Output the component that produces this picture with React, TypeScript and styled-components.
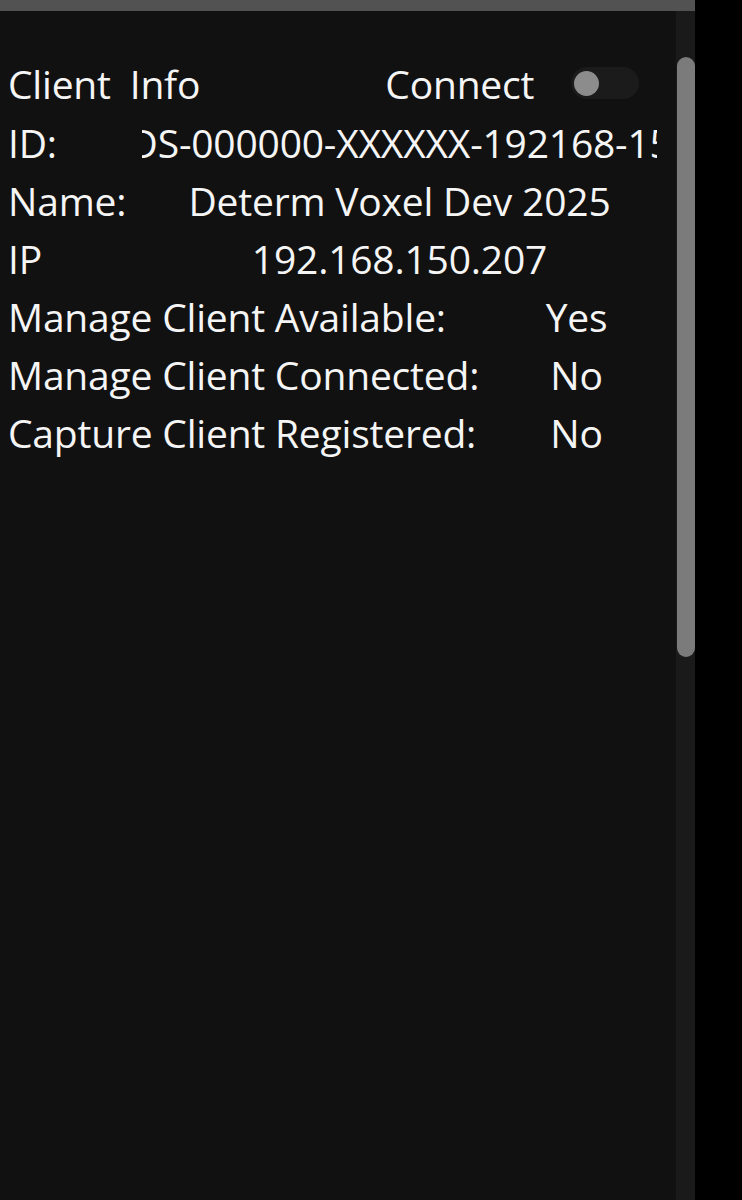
import React from "react";
import styled, { createGlobalStyle } from "styled-components";

const Global = createGlobalStyle`
  html, body { margin: 0; padding: 0; background: #000; }
  body { font-family: "Open Sans", "Noto Sans", sans-serif; }
`;

const Page = styled.div`
  width: 742px;
  height: 1200px;
  display: flex;
  background: #000;
  overflow: hidden;
`;

const Panel = styled.div`
  width: 695px;
  height: 1200px;
  display: flex;
  flex-direction: column;
  background: #111111;
`;

const TopBar = styled.div`
  height: 11px;
  background: #525252;
  flex-shrink: 0;
`;

const Body = styled.div`
  flex: 1;
  display: flex;
`;

const Content = styled.div`
  flex: 1;
  padding: 42px 0 0 8px;
  display: flex;
  flex-direction: column;
  color: #f5f5f5;
  font-size: 39px;
  letter-spacing: -0.2px;
`;

const Track = styled.div`
  width: 19px;
  background: #1a1a1a;
  padding-top: 46px;
  display: flex;
  justify-content: center;
`;

const Thumb = styled.div`
  width: 18px;
  height: 600px;
  background: #7b7b7b;
  border-radius: 9px;
`;

const Row = styled.div<{ $split?: boolean }>`
  display: grid;
  grid-template-columns: ${(p) => (p.$split ? "488px 161px" : "134px 515px")};
  align-items: center;
  height: 58px;
  white-space: nowrap;
`;

const HeaderRow = styled.div`
  display: flex;
  align-items: center;
  height: 60px;
  white-space: nowrap;
`;

const Title = styled.span`
  word-spacing: 9px;
`;

const ConnectLabel = styled.span`
  margin-left: 185px;
`;

const Toggle = styled.div`
  margin-left: 37px;
  width: 68px;
  height: 32px;
  border-radius: 16px;
  background: #1b1b1b;
  display: flex;
  align-items: center;
  padding-left: 3px;
  box-sizing: border-box;
`;

const Knob = styled.div`
  width: 25px;
  height: 25px;
  border-radius: 50%;
  background: #8c8c8c;
`;

const Label = styled.span``;

const Value = styled.div`
  display: flex;
  justify-content: center;
  overflow: hidden;
`;

const ValueText = styled.span`
  flex-shrink: 0;
`;

const rows: [string, string][] = [
  ["ID:", "CDS-000000-XXXXXX-192168-150"],
  ["Name:", "Determ Voxel Dev 2025"],
  ["IP", "192.168.150.207"],
];

const flags: [string, string][] = [
  ["Manage Client Available:", "Yes"],
  ["Manage Client Connected:", "No"],
  ["Capture Client Registered:", "No"],
];

export default function App() {
  return (
    <Page>
      <Global />
      <Panel>
        <TopBar />
        <Body>
          <Content>
            <HeaderRow>
              <Title>Client Info</Title>
              <ConnectLabel>Connect</ConnectLabel>
              <Toggle>
                <Knob />
              </Toggle>
            </HeaderRow>
            {rows.map(([l, v]) => (
              <Row key={l}>
                <Label>{l}</Label>
                <Value>
                  <ValueText>{v}</ValueText>
                </Value>
              </Row>
            ))}
            {flags.map(([l, v]) => (
              <Row key={l} $split>
                <Label>{l}</Label>
                <Value>
                  <ValueText>{v}</ValueText>
                </Value>
              </Row>
            ))}
          </Content>
          <Track>
            <Thumb />
          </Track>
        </Body>
      </Panel>
    </Page>
  );
}
